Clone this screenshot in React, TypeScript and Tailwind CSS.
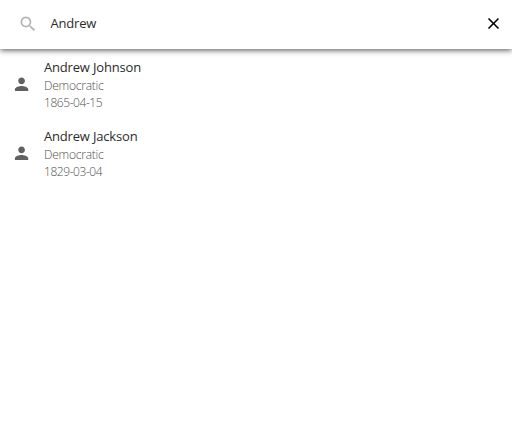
import React from "react";

type President = { name: string; party: string; date: string };

const results: President[] = [
  { name: "Andrew Johnson", party: "Democratic", date: "1865-04-15" },
  { name: "Andrew Jackson", party: "Democratic", date: "1829-03-04" },
];

function SearchIcon() {
  return (
    <svg viewBox="0 0 24 24" className="h-5 w-5 shrink-0 fill-[#b3b3b3]">
      <path d="M15.5 14h-.79l-.28-.27A6.471 6.471 0 0 0 16 9.5 6.5 6.5 0 1 0 9.5 16c1.61 0 3.09-.59 4.23-1.57l.27.28v.79l5 4.99L20.49 19l-4.99-5zm-6 0C7.01 14 5 11.99 5 9.5S7.01 5 9.5 5 14 7.01 14 9.5 11.99 14 9.5 14z" />
    </svg>
  );
}

function CloseIcon() {
  return (
    <svg viewBox="0 0 24 24" className="h-[19px] w-[19px] shrink-0 fill-black">
      <path d="M19 6.41 17.59 5 12 10.59 6.41 5 5 6.41 10.59 12 5 17.59 6.41 19 12 13.41 17.59 19 19 17.59 13.41 12z" />
    </svg>
  );
}

function PersonIcon() {
  return (
    <svg viewBox="0 0 24 24" className="h-5 w-5 shrink-0 fill-[#616161]">
      <path transform="translate(-.5 .3)" d="M12 12c2.21 0 4-1.79 4-4s-1.79-4-4-4-4 1.79-4 4 1.79 4 4 4zm0 2c-2.67 0-8 1.34-8 4v2h16v-2c0-2.66-5.33-4-8-4z" />
    </svg>
  );
}

export default function App() {
  return (
    <div className="h-screen overflow-hidden bg-white font-['Open_Sans',sans-serif]">
      <header className="flex h-[49px] items-center pr-[9px] pb-0.5 pl-[18px] shadow-[0_1px_6px_rgba(0,0,0,0.7)]">
        <SearchIcon />
        <span className="ml-[12.5px] flex-1 text-[13px] tracking-[-0.2px] text-[#2b2b2b]">Andrew</span>
        <CloseIcon />
      </header>
      <ul className="pt-[9px]">
        {results.map((person) => (
          <li key={person.name} className="flex h-[69px] pl-3">
            <div className="pt-4">
              <PersonIcon />
            </div>
            <div className="ml-3">
              <p className="text-[13px] leading-[19px] tracking-[-0.18px] text-[#2b2b2b]">{person.name}</p>
              <p className="text-[12px] leading-[17px] font-light tracking-[-0.23px] text-[#505050]">{person.party}</p>
              <p className="text-[12px] leading-[17px] font-light tracking-[-0.44px] text-[#505050]">{person.date}</p>
            </div>
          </li>
        ))}
      </ul>
    </div>
  );
}
